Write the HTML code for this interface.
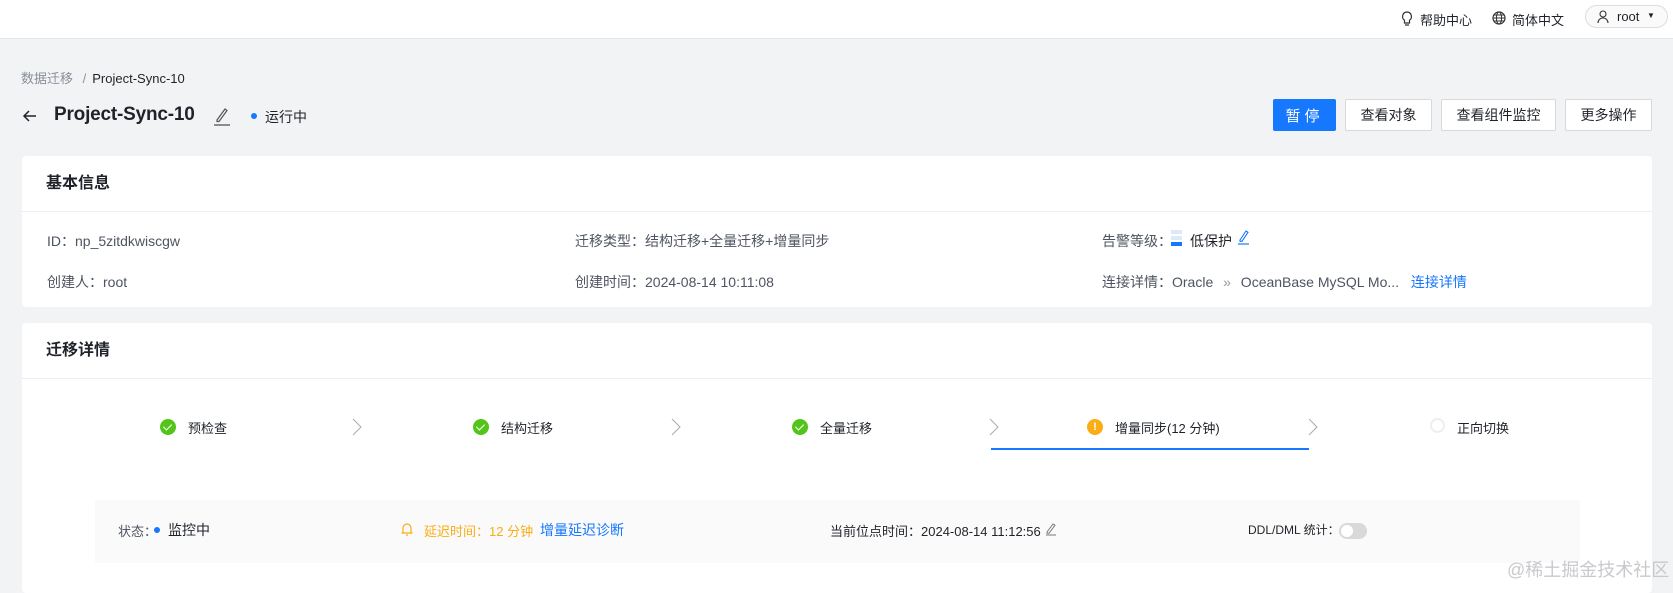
<!DOCTYPE html>
<html><head><meta charset="utf-8"><style>
*{margin:0;padding:0;box-sizing:border-box}
body{width:1673px;height:582px;overflow:hidden;background:#f2f3f5;font-family:"Liberation Sans","Noto Sans CJK SC",sans-serif;font-size:14px;color:#1f2329;position:relative}
.a{position:absolute;white-space:nowrap}
.hdr{position:absolute;left:0;top:0;width:1673px;height:39px;background:#fff;border-bottom:1px solid #e5e6e8}
.card{position:absolute;left:22px;width:1630px;background:#fff;border-radius:4px}
.btn{position:absolute;top:99px;height:32px;border:1px solid #d9d9d9;background:#fff;border-radius:2px;font-size:14px;display:flex;align-items:center;justify-content:center;color:#1f2329}
.chk{position:absolute;width:16px;height:16px;border-radius:50%;background:#52c41a;top:419px}
.chk:after{content:"";position:absolute;left:5px;top:3px;width:4px;height:7px;border:solid #fff;border-width:0 1.5px 1.5px 0;transform:rotate(45deg)}
.arr{position:absolute;top:418px;width:10px;height:18px}
</style></head><body>
<div class="hdr"></div>
<svg class="a" style="left:1401px;top:11px" width="12" height="16" viewBox="0 0 12 16"><path d="M6 1a4.5 4.5 0 0 0-2.5 8.2V12h5V9.2A4.5 4.5 0 0 0 6 1zM4 14h4" fill="none" stroke="#333" stroke-width="1.2"/></svg>
<div class="a" style="left:1420px;top:10px;font-size:13px">帮助中心</div>
<svg class="a" style="left:1492px;top:11px" width="14" height="14" viewBox="0 0 14 14"><circle cx="7" cy="7" r="6" fill="none" stroke="#333" stroke-width="1.2"/><ellipse cx="7" cy="7" rx="2.6" ry="6" fill="none" stroke="#333" stroke-width="1"/><path d="M1 7h12M2 4h10M2 10h10" stroke="#333" stroke-width="1"/></svg>
<div class="a" style="left:1512px;top:10px;font-size:13px">简体中文</div>
<div class="a" style="left:1585px;top:5px;width:83px;height:23px;border:1px solid #dcdde0;border-radius:12px;background:#fafafa"></div>
<svg class="a" style="left:1597px;top:10px" width="12" height="14" viewBox="0 0 12 14"><circle cx="6" cy="4" r="3" fill="none" stroke="#333" stroke-width="1.1"/><path d="M1 13c0-3 2.2-5 5-5s5 2 5 5" fill="none" stroke="#333" stroke-width="1.1"/></svg>
<div class="a" style="left:1617px;top:9px;font-size:13px">root</div>
<div class="a" style="left:1647px;top:11px;font-size:8px">▼</div>

<div class="a" style="left:21px;top:68px;font-size:13px;color:#8a8f99">数据迁移 <span style="margin:0 6px">/</span><span style="color:#1f2329">Project-Sync-10</span></div>
<svg class="a" style="left:22px;top:108px" width="16" height="16" viewBox="0 0 16 16"><path d="M14 8H2M7 3 2 8l5 5" fill="none" stroke="#1f2329" stroke-width="1.5"/></svg>
<div class="a" style="left:54px;top:104px;font-size:19px;font-weight:bold;letter-spacing:-0.2px">Project-Sync-10</div>
<svg class="a" style="left:213px;top:106px" width="18" height="20" viewBox="0 0 18 20"><path d="M4 14 12 3l2 1.5-8 11H4z" fill="none" stroke="#555" stroke-width="1.2"/><path d="M1 19h16" stroke="#555" stroke-width="1.3"/></svg>
<div class="a" style="left:251px;top:113px;width:6px;height:6px;border-radius:50%;background:#1677ff"></div>
<div class="a" style="left:265px;top:107px;font-size:14px">运行中</div>
<div class="btn" style="left:1273px;width:63px;background:#1677ff;border-color:#1677ff;color:#fff;font-size:15px;letter-spacing:4px">暂停</div>
<div class="btn" style="left:1345px;width:87px">查看对象</div>
<div class="btn" style="left:1441px;width:115px">查看组件监控</div>
<div class="btn" style="left:1565px;width:87px">更多操作</div>

<div class="card" style="top:156px;height:151px"><div class="a" style="left:0;top:55px;width:1630px;height:1px;background:#eceef1"></div></div>
<div class="a" style="left:46px;top:169px;font-size:16px;font-weight:bold">基本信息</div>
<div class="a" style="left:47px;top:231px;color:#4e5461">ID：np_5zitdkwiscgw</div>
<div class="a" style="left:575px;top:231px;color:#4e5461">迁移类型：结构迁移+全量迁移+增量同步</div>
<div class="a" style="left:1102px;top:231px;color:#4e5461">告警等级：</div>
<div class="a" style="left:1171px;top:230px;width:11px;height:4px;background:#dde9f8"></div>
<div class="a" style="left:1171px;top:236px;width:11px;height:4px;background:#dde9f8"></div>
<div class="a" style="left:1171px;top:242px;width:11px;height:4px;background:#1677ff"></div>
<div class="a" style="left:1190px;top:231px">低保护</div>
<svg class="a" style="left:1237px;top:229px" width="13" height="16" viewBox="0 0 13 16"><path d="M3 11 9 2l2 1.3-6 9H3z" fill="none" stroke="#1677ff" stroke-width="1.1"/><path d="M1 15h11" stroke="#1677ff" stroke-width="1.2"/></svg>
<div class="a" style="left:47px;top:272px;color:#4e5461">创建人：root</div>
<div class="a" style="left:575px;top:272px;color:#4e5461">创建时间：2024-08-14 10:11:08</div>
<div class="a" style="left:1102px;top:272px;color:#4e5461">连接详情：Oracle <span style="color:#999;margin:0 6px">»</span> OceanBase MySQL Mo... <span style="color:#1677ff;margin-left:8px">连接详情</span></div>

<div class="card" style="top:323px;height:270px"><div class="a" style="left:0;top:55px;width:1630px;height:1px;background:#eceef1"></div></div>
<div class="a" style="left:46px;top:336px;font-size:16px;font-weight:bold">迁移详情</div>

<div class="chk" style="left:160px"></div><div class="a" style="left:188px;top:418px;font-size:13px">预检查</div>
<svg class="arr" style="left:352px" viewBox="0 0 10 18"><path d="M1 1l8 8-8 8" fill="none" stroke="#aaa"/></svg>
<div class="chk" style="left:473px"></div><div class="a" style="left:501px;top:418px;font-size:13px">结构迁移</div>
<svg class="arr" style="left:671px" viewBox="0 0 10 18"><path d="M1 1l8 8-8 8" fill="none" stroke="#aaa"/></svg>
<div class="chk" style="left:792px"></div><div class="a" style="left:820px;top:418px;font-size:13px">全量迁移</div>
<svg class="arr" style="left:989px" viewBox="0 0 10 18"><path d="M1 1l8 8-8 8" fill="none" stroke="#aaa"/></svg>
<div class="a" style="left:1087px;top:419px;width:16px;height:16px;border-radius:50%;background:#faad14;color:#fff;font-size:11px;font-weight:bold;text-align:center;line-height:16px">!</div>
<div class="a" style="left:1115px;top:418px;font-size:13px">增量同步(12 分钟)</div>
<svg class="arr" style="left:1308px" viewBox="0 0 10 18"><path d="M1 1l8 8-8 8" fill="none" stroke="#aaa"/></svg>
<div class="a" style="left:991px;top:448px;width:318px;height:2px;background:#1677ff"></div>
<div class="a" style="left:1430px;top:418px;width:15px;height:15px;border-radius:50%;border:2px solid #eee"></div>
<div class="a" style="left:1457px;top:418px;font-size:13px">正向切换</div>

<div class="a" style="left:95px;top:500px;width:1485px;height:63px;background:#fafafa"></div>
<div class="a" style="left:118px;top:521px;font-size:13px;color:#4e5461">状态：</div>
<div class="a" style="left:154px;top:527px;width:6px;height:6px;border-radius:50%;background:#1677ff"></div>
<div class="a" style="left:168px;top:520px;font-size:14px">监控中</div>
<svg class="a" style="left:401px;top:521px" width="12" height="16" viewBox="0 0 12 16"><path d="M2 12V7a4 4 0 0 1 8 0v5h1.5H0.5zM5 14h2" fill="none" stroke="#faad14" stroke-width="1.2"/></svg>
<div class="a" style="left:424px;top:521px;font-size:13px;color:#faad14">延迟时间：12 分钟</div>
<div class="a" style="left:540px;top:520px;font-size:14px;color:#1677ff">增量延迟诊断</div>
<div class="a" style="left:830px;top:521px;font-size:13px;color:#1f2329">当前位点时间：2024-08-14 11:12:56</div>
<svg class="a" style="left:1045px;top:522px" width="12" height="14" viewBox="0 0 12 14"><path d="M2 10 8 2l2 1.3-6 8H2z" fill="none" stroke="#777" stroke-width="1"/><path d="M1 13h10" stroke="#777"/></svg>
<div class="a" style="left:1248px;top:521px;font-size:12px">DDL/DML 统计：</div>
<div class="a" style="left:1339px;top:523px;width:28px;height:16px;border-radius:8px;background:#d9d9d9"><div style="position:absolute;left:2px;top:2px;width:12px;height:12px;border-radius:50%;background:#fff"></div></div>
<div class="a" style="left:1507px;top:556px;font-size:18px;color:#c8c9cc">@稀土掘金技术社区</div>
</body></html>
